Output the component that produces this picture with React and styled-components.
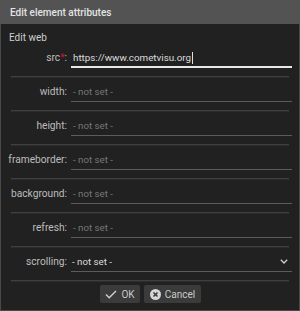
import React from "react";
import styled, { createGlobalStyle } from "styled-components";

const Global = createGlobalStyle`
  html, body {
    margin: 0;
    padding: 0;
    background: #222;
  }
  body {
    font-family: Roboto, "Liberation Sans", sans-serif;
  }
`;

const Dialog = styled.div`
  width: 300px;
  height: 311px;
  box-sizing: border-box;
  display: flex;
  flex-direction: column;
  background: #212121;
`;

const Header = styled.div`
  height: 24px;
  flex-shrink: 0;
  background: #535353;
  color: #e4e4e4;
  font-size: 10px;
  font-weight: 500;
  display: flex;
  align-items: center;
  padding-left: 10px;
`;

const Body = styled.div`
  flex: 1;
  border: 1px solid #4a4a4a;
  border-top: none;
  padding: 7px 0 7px 0;
  display: flex;
  flex-direction: column;
`;

const Legend = styled.div`
  height: 13px;
  line-height: 13px;
  font-size: 10px;
  color: #cfcfcf;
  padding-left: 8px;
`;

const Row = styled.div`
  display: flex;
  align-items: stretch;
  padding: 4px 7px 0 8px;
  margin-bottom: 8px;
`;

const Label = styled.div`
  width: 58px;
  flex-shrink: 0;
  text-align: right;
  font-size: 10.2px;
  color: #bdbdbd;
  display: flex;
  align-items: center;
  justify-content: flex-end;
  padding-right: 4px;
  padding-bottom: 1px;
`;

const Req = styled.span`
  color: #d0103a;
`;

const Input = styled.div`
  flex: 1;
  height: 20px;
  box-sizing: border-box;
  border-bottom: ${(p) => (p.$focus ? "2px solid #e8e8e8" : "1px solid #5c5c5c")};
  display: flex;
  align-items: center;
  padding-left: ${(p) => (p.$select ? "1px" : "2px")};
  padding-top: ${(p) => (p.$focus ? "1px" : "0")};
  font-size: ${(p) => (p.$focus ? "9.8px" : "9.7px")};
  color: ${(p) => (p.$placeholder ? "#777" : "#dcdcdc")};
`;

const Caret = styled.span`
  display: inline-block;
  width: 1px;
  height: 12px;
  background: #e0e0e0;
  margin-left: 1px;
`;

const Chevron = styled.svg`
  margin-left: auto;
  margin-right: 4px;
`;

const Separator = styled.div`
  height: 1px;
  margin: 0 10px;
  border-top: 1px solid #3f3f3f;
  background: #2c2c2c;
`;

const Buttons = styled.div`
  display: flex;
  justify-content: center;
  gap: 4px;
  margin-top: auto;
  padding-left: 1px;
`;

const Button = styled.button`
  height: 18px;
  border: none;
  border-radius: 2px;
  background: #3b3b3b;
  color: #c9c9c9;
  font-family: Roboto, "Liberation Sans", sans-serif;
  font-size: 10px;
  display: flex;
  align-items: center;
  gap: 4px;
  padding: 0;
  width: ${(p) => p.$w}px;
  justify-content: center;
`;

const fields = [
  { name: "width" },
  { name: "height" },
  { name: "frameborder" },
  { name: "background" },
  { name: "refresh" },
];

export default function App() {
  return (
    <>
      <Global />
      <Dialog>
        <Header>Edit element attributes</Header>
        <Body>
          <Legend>Edit web</Legend>
          <Row>
            <Label>
              src<Req>*</Req>:
            </Label>
            <Input $focus>
              https://www.cometvisu.org
              <Caret />
            </Input>
          </Row>
          <Separator />
          {fields.map((f) => (
            <React.Fragment key={f.name}>
              <Row>
                <Label>{f.name}:</Label>
                <Input $placeholder>- not set -</Input>
              </Row>
              <Separator />
            </React.Fragment>
          ))}
          <Row>
            <Label>scrolling:</Label>
            <Input $select>
              - not set -
              <Chevron width="8" height="5" viewBox="0 0 8 5">
                <path d="M0.8 0.8l3.2 3.2L7.2 0.8" fill="none" stroke="#cfcfcf" strokeWidth="1.3" />
              </Chevron>
            </Input>
          </Row>
          <Separator />
          <Buttons>
            <Button $w={40}>
              <svg width="12" height="9" viewBox="0 0 12 9">
                <path d="M1 4.5l3.2 3.2L11 1" fill="none" stroke="#cfcfcf" strokeWidth="1.4" />
              </svg>
              OK
            </Button>
            <Button $w={57}>
              <svg width="11" height="11" viewBox="0 0 12 12">
                <circle cx="6" cy="6" r="6" fill="#d6d6d6" />
                <path d="M3.8 3.8l4.4 4.4M8.2 3.8l-4.4 4.4" stroke="#3b3b3b" strokeWidth="1.7" />
              </svg>
              Cancel
            </Button>
          </Buttons>
        </Body>
      </Dialog>
    </>
  );
}
